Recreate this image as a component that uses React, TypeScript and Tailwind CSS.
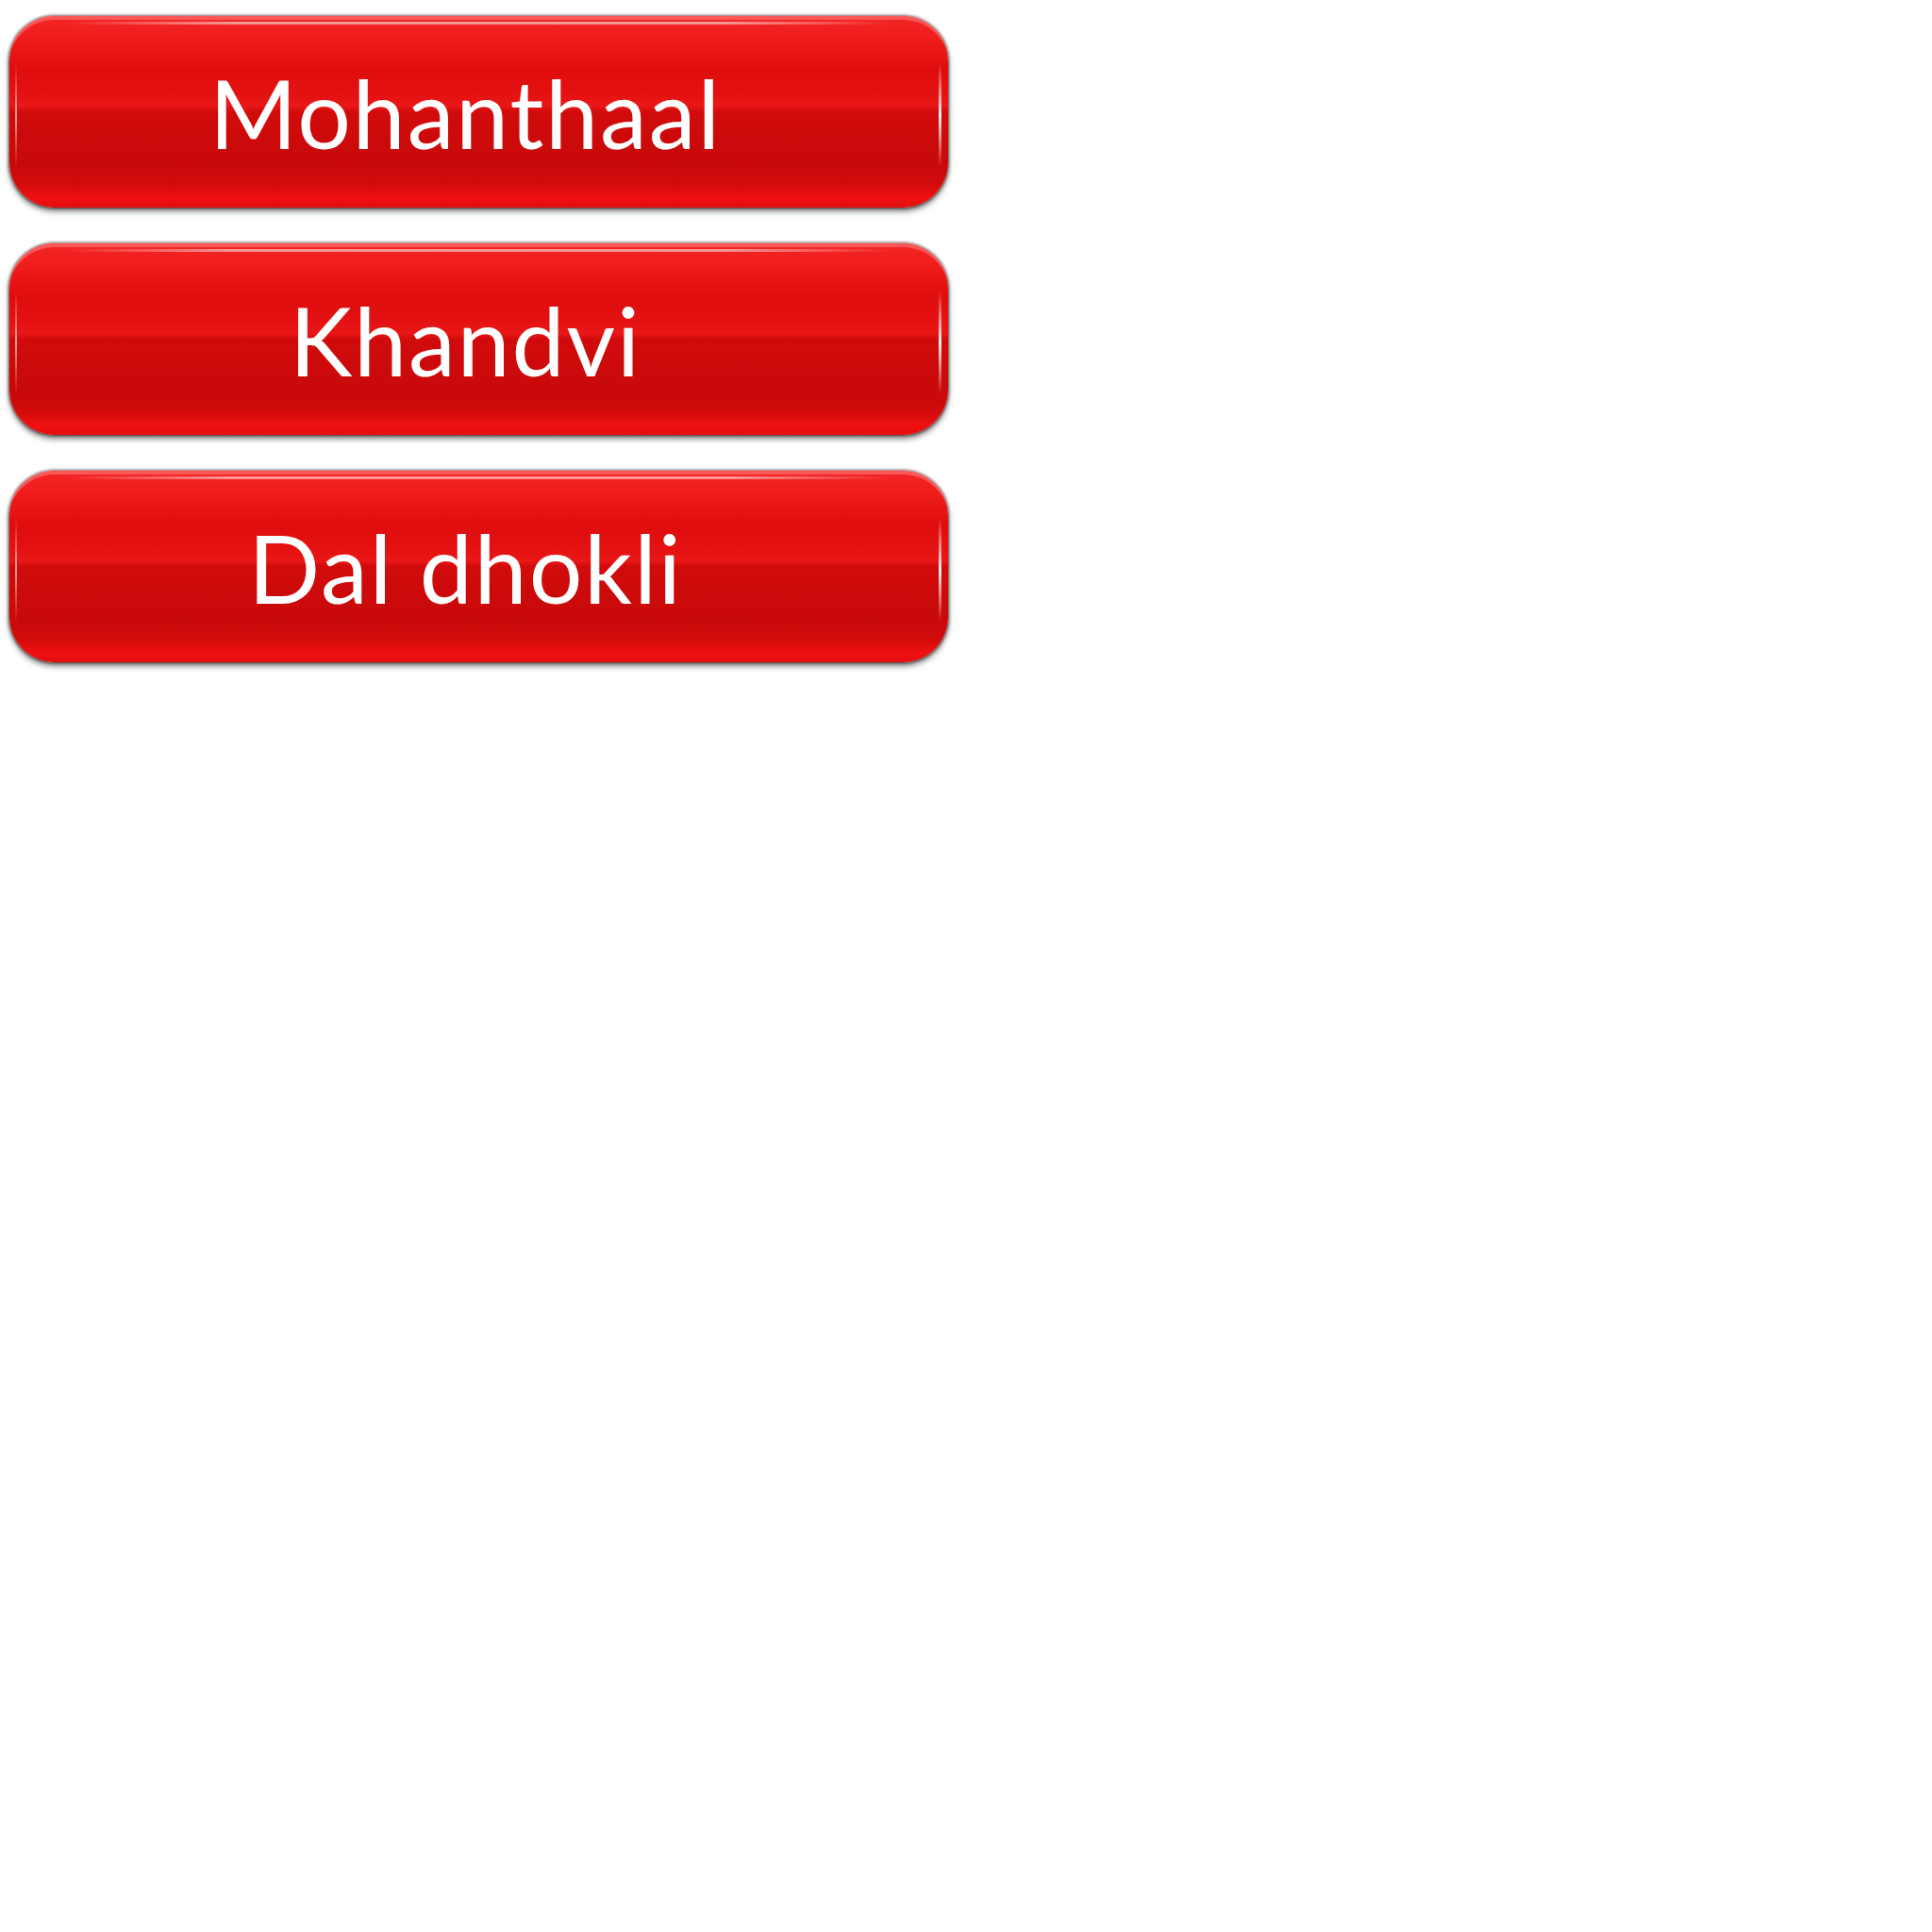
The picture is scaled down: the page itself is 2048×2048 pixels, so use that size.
const items = ['Mohanthaal', 'Khandvi', 'Dal dhokli'];

const GlossyButton = ({ label }: { label: string }) => {
  return (
    <button className="relative flex h-[203px] w-[995px] items-center justify-center overflow-hidden rounded-[48px] pr-[28px] bg-[linear-gradient(to_bottom,#f42626_0%,#ef1c1c_12%,#df0d0d_28%,#e31111_40%,#ea1717_47%,#d10b0b_50%,#c8090a_78%,#d20b0b_88%,#f01111_95%,#e20d0d_100%)] shadow-[0_4px_6px_rgba(0,0,0,0.5),0_0_3px_1px_rgba(60,0,0,0.6),inset_0_6px_0_-2px_rgba(255,130,130,0.55)]">
      {/* top gloss line */}
      <span className="absolute left-[60px] right-[60px] top-[6px] h-[3px] rounded-full bg-[linear-gradient(to_right,rgba(255,200,200,0),rgba(255,200,200,0.7)_20%,rgba(255,200,200,0.7)_80%,rgba(255,200,200,0))]" />
      {/* side shines */}
      <span className="absolute right-[7px] top-[50px] h-[110px] w-[3px] rounded-full bg-[linear-gradient(to_bottom,rgba(255,255,255,0),rgba(255,255,255,0.95)_50%,rgba(255,255,255,0))]" />
      <span className="absolute left-[6px] top-[50px] h-[110px] w-[2px] rounded-full bg-[linear-gradient(to_bottom,rgba(255,255,255,0),rgba(255,255,255,0.6)_50%,rgba(255,255,255,0))]" />
      <span className="relative font-['Lato','Liberation_Sans',sans-serif] text-[100px] leading-none tracking-[2px] text-white">
        {label}
      </span>
    </button>
  );
};

const App = () => {
  return (
    <div className="min-h-screen bg-white">
      <div className="flex flex-col gap-[38px] pl-[10px] pt-[17px]">
        {items.map(item => (
          <GlossyButton key={item} label={item} />
        ))}
      </div>
    </div>
  );
};

export default App;
